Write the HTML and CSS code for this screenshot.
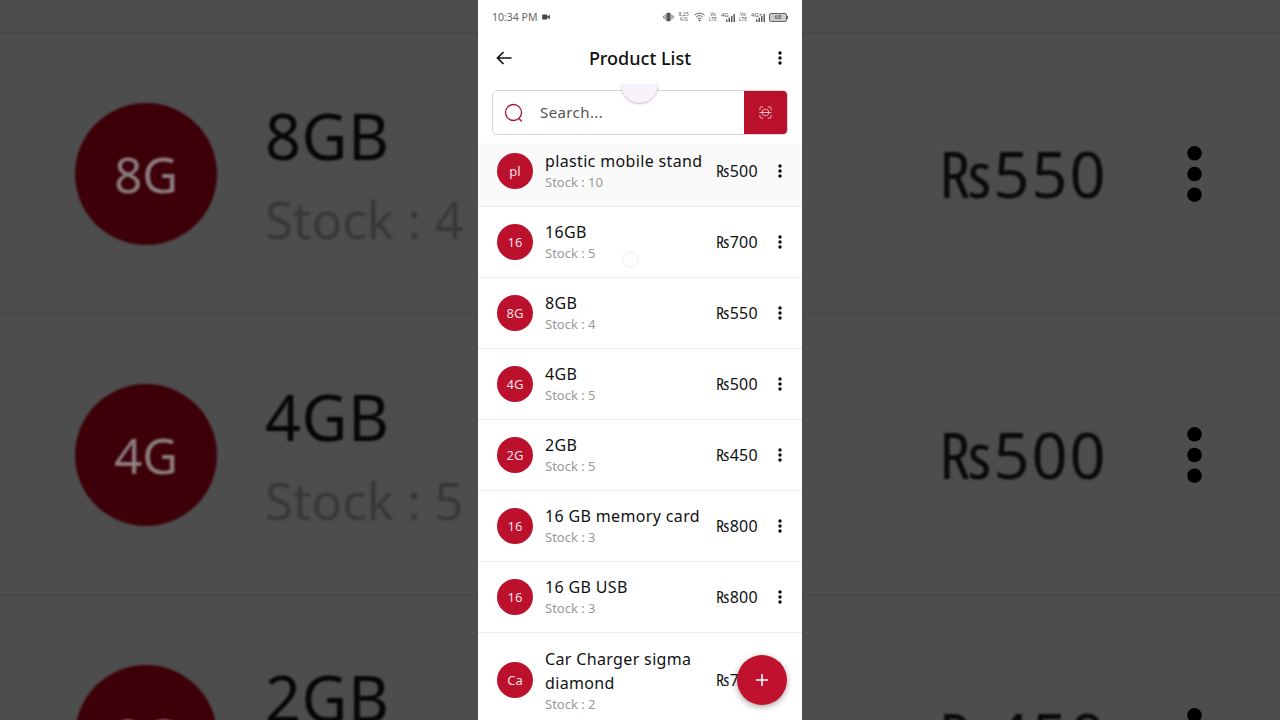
FILE: index.html
```html
<!DOCTYPE html>
<html lang="en">
  <head>
    <meta charset="UTF-8" />
    <meta name="viewport" content="width=device-width, initial-scale=1.0" />
    <title>Product List</title>
    <link rel="stylesheet" href="styles.css">
  </head>

  <body>
    <svg class="defs" width="0" height="0">
      <symbol id="dots" viewBox="0 0 4 14">
        <circle cx="2" cy="2" r="1.75" />
        <circle cx="2" cy="7" r="1.75" />
        <circle cx="2" cy="12" r="1.75" />
      </symbol>
    </svg>

    <div id="app">
      <!-- blurred copy of the video, left side -->
      <div class="side side-left">
        <div class="side-row">
          <div class="side-avatar">8G</div>
          <div class="side-text">
            <div class="side-name">8GB</div>
            <div class="side-stock">Stock : 4</div>
          </div>
        </div>
        <div class="side-row">
          <div class="side-avatar">4G</div>
          <div class="side-text">
            <div class="side-name">4GB</div>
            <div class="side-stock">Stock : 5</div>
          </div>
        </div>
        <div class="side-row">
          <div class="side-avatar">2G</div>
          <div class="side-text">
            <div class="side-name">2GB</div>
            <div class="side-stock">Stock : 5</div>
          </div>
        </div>
      </div>

      <div class="phone">
        <div class="status">
          <span class="time">10:34 PM</span>
          <svg class="rec" width="8" height="6" viewBox="0 0 9 7"><rect x="0" y="0.5" width="6" height="6" rx="1" /><path d="M6 3l3-2v5l-3-2z" /></svg>
          <div class="status-right">
            <svg width="11" height="10" viewBox="0 0 13 11"><rect x="4" y="0.5" width="5" height="10" rx="1" /><path d="M2.5 2.5v6M0.8 4v3M10.5 2.5v6M12.2 4v3" class="line" /></svg>
            <div class="tiny tiny-speed"><span>8.25</span><span>K/S</span></div>
            <svg width="11" height="10" viewBox="0 0 12 10"><path d="M0.500 3a8 8 0 0 1 11 0M2.300 5a5.400 5.400 0 0 1 7.400 0M4 7a3 3 0 0 1 4 0" class="line" /><circle cx="6" cy="8.800" r="1" /></svg>
            <div class="tiny"><span>Vo</span><span>LTE</span></div>
            <div class="net"><span class="net-label">4G</span><svg width="9" height="8" viewBox="0 0 10 9"><rect x="0" y="6" width="1.600" height="3" /><rect x="2.800" y="4" width="1.600" height="5" /><rect x="5.600" y="2" width="1.600" height="7" /><rect x="8.400" y="0" width="1.600" height="9" /></svg></div>
            <div class="tiny"><span>Vo</span><span>LTE</span></div>
            <div class="net"><span class="net-label">4G+</span><svg width="9" height="8" viewBox="0 0 10 9"><rect x="0" y="6" width="1.600" height="3" /><rect x="2.800" y="4" width="1.600" height="5" /><rect x="5.600" y="2" width="1.600" height="7" /><rect x="8.400" y="0" width="1.600" height="9" /></svg></div>
            <div class="battery"><span class="battery-body">68</span><span class="battery-tip"></span></div>
          </div>
        </div>

        <div class="top">
          <svg class="back" width="16" height="14" viewBox="0 0 16 14"><path d="M15.500 7H1.500M7.500 1L1.500 7l6 6" /></svg>
          <div class="title">Product List</div>
          <svg class="more" width="4" height="14"><use href="#dots" /></svg>
        </div>

        <div class="search">
          <div class="search-box">
            <svg class="search-icon" width="20" height="20" viewBox="0 0 20 20"><circle cx="9.500" cy="9.500" r="8" /><path d="M15 15.500l2.800 3" /></svg>
            <span class="placeholder">Search...</span>
            <div class="scan">
              <svg width="13" height="13" viewBox="0 0 14 14"><path d="M1 4.500V2.500A1.500 1.500 0 0 1 2.500 1H4.500M9.500 1H11.500A1.500 1.500 0 0 1 13 2.500V4.500M13 9.500V11.500A1.500 1.500 0 0 1 11.500 13H9.500M4.500 13H2.500A1.500 1.500 0 0 1 1 11.500V9.500M0.500 7H13.500M3.500 7C3.500 4.500 5 3.500 7 3.500S10.500 4.500 10.500 7M3.500 7C3.500 9.500 5 10.500 7 10.500S10.500 9.500 10.500 7" /></svg>
            </div>
          </div>
        </div>

        <div class="list">
          <div class="row pressed">
            <div class="avatar">pl</div>
            <div class="info"><div class="name">plastic mobile stand</div><div class="stock">Stock : 10</div></div>
            <div class="price">₨500</div>
            <svg class="more" width="4" height="14"><use href="#dots" /></svg>
          </div>
          <div class="row">
            <div class="avatar">16</div>
            <div class="info"><div class="name">16GB</div><div class="stock">Stock : 5</div></div>
            <div class="price">₨700</div>
            <svg class="more" width="4" height="14"><use href="#dots" /></svg>
          </div>
          <div class="row">
            <div class="avatar">8G</div>
            <div class="info"><div class="name">8GB</div><div class="stock">Stock : 4</div></div>
            <div class="price">₨550</div>
            <svg class="more" width="4" height="14"><use href="#dots" /></svg>
          </div>
          <div class="row">
            <div class="avatar">4G</div>
            <div class="info"><div class="name">4GB</div><div class="stock">Stock : 5</div></div>
            <div class="price">₨500</div>
            <svg class="more" width="4" height="14"><use href="#dots" /></svg>
          </div>
          <div class="row">
            <div class="avatar">2G</div>
            <div class="info"><div class="name">2GB</div><div class="stock">Stock : 5</div></div>
            <div class="price">₨450</div>
            <svg class="more" width="4" height="14"><use href="#dots" /></svg>
          </div>
          <div class="row">
            <div class="avatar">16</div>
            <div class="info"><div class="name">16 GB memory card</div><div class="stock">Stock : 3</div></div>
            <div class="price">₨800</div>
            <svg class="more" width="4" height="14"><use href="#dots" /></svg>
          </div>
          <div class="row">
            <div class="avatar">16</div>
            <div class="info"><div class="name">16 GB USB</div><div class="stock">Stock : 3</div></div>
            <div class="price">₨800</div>
            <svg class="more" width="4" height="14"><use href="#dots" /></svg>
          </div>
          <div class="row">
            <div class="avatar">Ca</div>
            <div class="info"><div class="name">Car Charger sigma diamond</div><div class="stock">Stock : 2</div></div>
            <div class="price">₨700</div>
            <svg class="more" width="4" height="14"><use href="#dots" /></svg>
          </div>
        </div>

        <!-- touch markers from the screen recording -->
        <div class="touch-top"></div>
        <div class="touch-ring"></div>

        <div class="fab">
          <svg width="14" height="14" viewBox="0 0 14 14"><path d="M7 1v12M1 7h12" /></svg>
        </div>
      </div>

      <!-- blurred copy of the video, right side -->
      <div class="side side-right">
        <div class="side-row">
          <div class="side-price">₨550</div>
          <svg class="side-more" width="17" height="58"><use href="#dots" /></svg>
        </div>
        <div class="side-row">
          <div class="side-price">₨500</div>
          <svg class="side-more" width="17" height="58"><use href="#dots" /></svg>
        </div>
        <div class="side-row">
          <div class="side-price">₨450</div>
          <svg class="side-more" width="17" height="58"><use href="#dots" /></svg>
        </div>
      </div>
    </div>
  </body>
</html>
```

FILE: styles.css
```css
* {
  margin: 0;
  padding: 0;
  box-sizing: border-box;
}

body {
  background-color: #4d4d4d;
  font-family: "Noto Sans", "Open Sans", sans-serif;
}

.defs {
  display: block;
  height: 0;
}

#app {
  width: 1280px;
  height: 720px;
  display: grid;
  grid-template-columns: 478px 324px 478px;
  overflow: hidden;
}

/* side panels */
.side {
  height: 720px;
  overflow: hidden;
  background-color: #4d4d4d;
  padding-top: 32px;
}

.side > .side-row {
  height: 281px;
  border-top: 2px solid #484848;
  display: flex;
  align-items: center;
}

.side-left .side-row {
  padding-left: 75px;
}

.side-avatar {
  width: 142px;
  height: 142px;
  border-radius: 50%;
  background-color: #3d0008;
  color: #8b7d7e;
  font-size: 49px;
  display: flex;
  align-items: center;
  justify-content: center;
  flex-shrink: 0;
  filter: blur(0.8px);
}

.side-text {
  margin-left: 48px;
  white-space: nowrap;
  filter: blur(0.9px);
}

.side-name {
  font-size: 63px;
  line-height: 88px;
  letter-spacing: 0.5px;
  color: #060606;
}

.side-stock {
  margin-top: 3px;
  font-size: 51px;
  line-height: 72px;
  color: #383838;
}

.side-right .side-row {
  padding-left: 137px;
}

.side-price {
  width: 247px;
  font-size: 63px;
  letter-spacing: 2px;
  color: #0a0a0a;
  filter: blur(0.9px);
}

.side-more {
  fill: #000;
}

/* phone */
.phone {
  height: 720px;
  overflow: hidden;
  position: relative;
  background-color: #fff;
}

.status {
  height: 34px;
  padding: 0 14px;
  display: flex;
  align-items: center;
  color: #666;
}

.time {
  font-size: 10.500px;
}

.rec {
  margin-left: 5px;
  fill: #444;
}

.status-right {
  margin-left: auto;
  display: flex;
  align-items: center;
  gap: 4px;
}

.status-right svg {
  fill: #555;
}

.status-right .line {
  fill: none;
  stroke: #555;
  stroke-width: 1;
}

.tiny {
  display: flex;
  flex-direction: column;
  align-items: center;
  font-size: 5px;
  line-height: 5.500px;
  color: #555;
}

.tiny-speed {
  width: 12px;
}

.net {
  width: 14px;
  display: flex;
  align-items: flex-end;
  justify-content: flex-end;
  position: relative;
  height: 10px;
}

.net-label {
  position: absolute;
  left: 0;
  top: 0;
  font-size: 6px;
  line-height: 6px;
  color: #555;
}

.battery {
  display: flex;
  align-items: center;
}

.battery-body {
  width: 18px;
  height: 9px;
  border: 1px solid #666;
  border-radius: 2px;
  background-color: #ccc;
  font-size: 6px;
  line-height: 7px;
  text-align: center;
  color: #333;
}

.battery-tip {
  width: 1px;
  height: 3px;
  background-color: #666;
}

.top {
  height: 48px;
  padding: 0 20px 0 18px;
  display: flex;
  align-items: center;
  justify-content: space-between;
}

.back {
  fill: none;
  stroke: #111;
  stroke-width: 1.700;
}

.title {
  margin-right: 10px;
  font-size: 18px;
  font-weight: 500;
  color: #111;
}

.more {
  fill: #111;
  flex-shrink: 0;
}

.search {
  height: 54px;
  padding: 8px 14px 0 14px;
}

.search-box {
  height: 45px;
  border: 1px solid #d6d6d6;
  border-radius: 5px;
  display: flex;
  align-items: center;
  overflow: hidden;
}

.search-icon {
  margin-left: 11px;
  fill: none;
  stroke: #a3152f;
  stroke-width: 1.300;
}

.placeholder {
  margin-left: 16px;
  padding-bottom: 2px;
  font-size: 15px;
  letter-spacing: 0.400px;
  color: #555;
}

.scan {
  margin-left: auto;
  width: 43px;
  height: 100%;
  background-color: #b9102b;
  display: flex;
  align-items: center;
  justify-content: center;
}

.scan svg {
  fill: none;
  stroke: #f4c9d0;
  stroke-width: 1;
}

.row {
  min-height: 71px;
  padding: 13px 20px 13px 19px;
  border-bottom: 1px solid #ececec;
  display: flex;
  align-items: center;
}

.row:last-child {
  padding-top: 14px;
  padding-bottom: 14px;
}

.pressed {
  background: linear-gradient(#fff 7px, #fafafa 7px);
}

.avatar {
  width: 36px;
  height: 36px;
  border-radius: 50%;
  background-color: #bb112c;
  color: #f6dfe3;
  font-size: 13px;
  display: flex;
  align-items: center;
  justify-content: center;
  flex-shrink: 0;
}

.info {
  margin-left: 12px;
  width: 171px;
  padding-bottom: 2px;
  flex-shrink: 0;
}

.row:last-child .info {
  padding-bottom: 0;
}

.name {
  font-size: 16px;
  line-height: 24px;
  letter-spacing: 0.350px;
  color: #111;
  width: 165px;
}

.stock {
  font-size: 13px;
  line-height: 18px;
  color: #999;
}

.price {
  width: 62px;
  font-size: 16px;
  letter-spacing: 0.300px;
  color: #111;
  flex-shrink: 0;
}

.touch-top {
  position: absolute;
  left: 143px;
  top: 84px;
  width: 37px;
  height: 19px;
  border-radius: 0 0 19px 19px;
  background-color: #f8f3fa;
  box-shadow: 0 1px 2px rgba(0, 0, 0, 0.25);
}

.touch-ring {
  position: absolute;
  left: 144px;
  top: 251px;
  width: 17px;
  height: 17px;
  border-radius: 50%;
  border: 1px solid #eee;
  background-color: #fdfdfd;
}

.fab {
  position: absolute;
  left: 259px;
  top: 655px;
  width: 50px;
  height: 50px;
  border-radius: 50%;
  background-color: #c0122e;
  box-shadow: 0 2px 6px rgba(0, 0, 0, 0.35);
  display: flex;
  align-items: center;
  justify-content: center;
}

.fab svg {
  fill: none;
  stroke: #fff;
  stroke-width: 1.600;
}
```
